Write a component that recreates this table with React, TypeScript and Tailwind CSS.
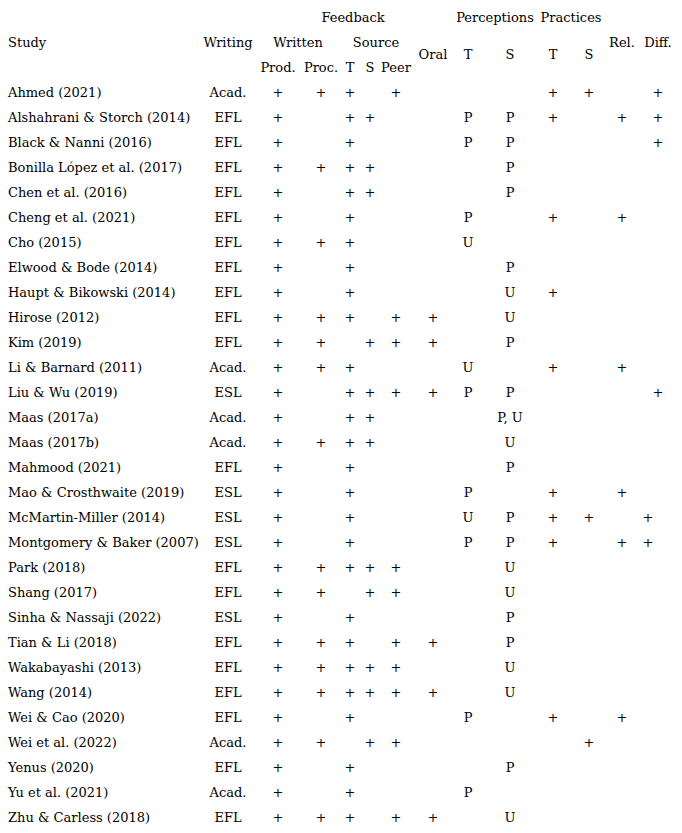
const rows: string[][] = [
  ["Ahmed (2021)", "Acad.", "+", "+", "+", "", "+", "", "", "", "+", "+", "", "+"],
  ["Alshahrani & Storch (2014)", "EFL", "+", "", "+", "+", "", "", "P", "P", "+", "", "+", "+"],
  ["Black & Nanni (2016)", "EFL", "+", "", "+", "", "", "", "P", "P", "", "", "", "+"],
  ["Bonilla López et al. (2017)", "EFL", "+", "+", "+", "+", "", "", "", "P", "", "", "", ""],
  ["Chen et al. (2016)", "EFL", "+", "", "+", "+", "", "", "", "P", "", "", "", ""],
  ["Cheng et al. (2021)", "EFL", "+", "", "+", "", "", "", "P", "", "+", "", "+", ""],
  ["Cho (2015)", "EFL", "+", "+", "+", "", "", "", "U", "", "", "", "", ""],
  ["Elwood & Bode (2014)", "EFL", "+", "", "+", "", "", "", "", "P", "", "", "", ""],
  ["Haupt & Bikowski (2014)", "EFL", "+", "", "+", "", "", "", "", "U", "+", "", "", ""],
  ["Hirose (2012)", "EFL", "+", "+", "+", "", "+", "+", "", "U", "", "", "", ""],
  ["Kim (2019)", "EFL", "+", "+", "", "+", "+", "+", "", "P", "", "", "", ""],
  ["Li & Barnard (2011)", "Acad.", "+", "+", "+", "", "", "", "U", "", "+", "", "+", ""],
  ["Liu & Wu (2019)", "ESL", "+", "", "+", "+", "+", "+", "P", "P", "", "", "", "+"],
  ["Maas (2017a)", "Acad.", "+", "", "+", "+", "", "", "", "P, U", "", "", "", ""],
  ["Maas (2017b)", "Acad.", "+", "+", "+", "+", "", "", "", "U", "", "", "", ""],
  ["Mahmood (2021)", "EFL", "+", "", "+", "", "", "", "", "P", "", "", "", ""],
  ["Mao & Crosthwaite (2019)", "ESL", "+", "", "+", "", "", "", "P", "", "+", "", "+", ""],
  ["McMartin-Miller (2014)", "ESL", "+", "", "+", "", "", "", "U", "P", "+", "+", "", "+<"],
  ["Montgomery & Baker (2007)", "ESL", "+", "", "+", "", "", "", "P", "P", "+", "", "+", "+<"],
  ["Park (2018)", "EFL", "+", "+", "+", "+", "+", "", "", "U", "", "", "", ""],
  ["Shang (2017)", "EFL", "+", "+", "", "+", "+", "", "", "U", "", "", "", ""],
  ["Sinha & Nassaji (2022)", "ESL", "+", "", "+", "", "", "", "", "P", "", "", "", ""],
  ["Tian & Li (2018)", "EFL", "+", "+", "+", "", "+", "+", "", "P", "", "", "", ""],
  ["Wakabayashi (2013)", "EFL", "+", "+", "+", "+", "+", "", "", "U", "", "", "", ""],
  ["Wang (2014)", "EFL", "+", "+", "+", "+", "+", "+", "", "U", "", "", "", ""],
  ["Wei & Cao (2020)", "EFL", "+", "", "+", "", "", "", "P", "", "+", "", "+", ""],
  ["Wei et al. (2022)", "Acad.", "+", "+", "", "+", "+", "", "", "", "", "+", "", ""],
  ["Yenus (2020)", "EFL", "+", "", "+", "", "", "", "", "P", "", "", "", ""],
  ["Yu et al. (2021)", "Acad.", "+", "", "+", "", "", "", "P", "", "", "", "", ""],
  ["Zhu & Carless (2018)", "EFL", "+", "+", "+", "", "+", "+", "", "U", "", "", "", ""],
];

const cell = "flex items-center justify-center whitespace-nowrap";

export default function App() {
  return (
    <div className="min-h-screen bg-white pt-[5px] text-[13px] text-black [font-family:'DejaVu_Serif',serif]">
      <div className="grid grid-cols-[203px_50px_50px_36px_22px_18px_34px_40px_30px_54px_32px_40px_26px_46px] auto-rows-[25px]">
        {/* header */}
        <div className="row-span-3 flex items-center pl-2 whitespace-nowrap">Study</div>
        <div className={`row-span-3 ${cell}`}>Writing</div>
        <div className={`col-span-6 ${cell}`}>Feedback</div>
        <div className={`col-span-2 ${cell}`}>Perceptions</div>
        <div className={`col-span-2 pr-1 ${cell}`}>Practices</div>
        <div className={`row-span-3 ${cell}`}>Rel.</div>
        <div className={`row-span-3 ${cell}`}>Diff.</div>

        <div className={`col-span-2 pl-1 ${cell}`}>Written</div>
        <div className={`col-span-3 ${cell}`}>Source</div>
        <div className={`row-span-2 ${cell}`}>Oral</div>
        <div className={`row-span-2 ${cell}`}>T</div>
        <div className={`row-span-2 ${cell}`}>S</div>
        <div className={`row-span-2 ${cell}`}>T</div>
        <div className={`row-span-2 ${cell}`}>S</div>

        <div className={cell}>Prod.</div>
        <div className={cell}>Proc.</div>
        <div className={cell}>T</div>
        <div className={cell}>S</div>
        <div className={cell}>Peer</div>

        {/* body */}
        {rows.map((r) =>
          r.map((v, i) =>
            i === 0 ? (
              <div key={r[0] + i} className="flex items-center pl-2 whitespace-nowrap">{v}</div>
            ) : v === "+<" ? (
              <div key={r[0] + i} className={`pr-5 ${cell}`}>+</div>
            ) : (
              <div key={r[0] + i} className={cell}>{v}</div>
            )
          )
        )}
      </div>
    </div>
  );
}
